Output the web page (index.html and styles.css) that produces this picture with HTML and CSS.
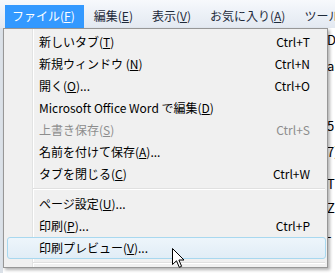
FILE: index.html
```html
<!DOCTYPE html>
<html lang="ja">
<head>
<meta charset="utf-8">
<link rel="stylesheet" href="styles.css">
</head>
<body>
<div class="window">
  <div class="menubar">
    <span class="mb-item active">ファイル(<u>F</u>)</span>
    <span class="mb-item">編集(<u>E</u>)</span>
    <span class="mb-item">表示(<u>V</u>)</span>
    <span class="mb-item">お気に入り(<u>A</u>)</span>
    <span class="mb-item">ツール(<u>T</u>)</span>
  </div>
  <div class="page">
    <div class="sidebar"></div>
    <div class="content">
      <p class="frag f1">Da</p>
      <p class="frag f2">al</p>
      <p class="frag f3">5</p>
      <p class="frag f4">7)</p>
      <p class="frag f5">T</p>
      <p class="frag f6">Z</p>
      <p class="frag f7">-</p>
    </div>
  </div>

  <div class="menu">
    <div class="item"><span>新しいタブ(<u>T</u>)</span><span class="key">Ctrl+T</span></div>
    <div class="item"><span>新規ウィンドウ (<u>N</u>)</span><span class="key">Ctrl+N</span></div>
    <div class="item"><span>開く(<u>O</u>)...</span><span class="key">Ctrl+O</span></div>
    <div class="item"><span>Microsoft Office Word で編集(<u>D</u>)</span></div>
    <div class="item disabled"><span>上書き保存(<u>S</u>)</span><span class="key">Ctrl+S</span></div>
    <div class="item"><span>名前を付けて保存(<u>A</u>)...</span></div>
    <div class="item"><span>タブを閉じる(<u>C</u>)</span><span class="key">Ctrl+W</span></div>
    <div class="sep"></div>
    <div class="item"><span>ページ設定(<u>U</u>)...</span></div>
    <div class="item"><span>印刷(<u>P</u>)...</span><span class="key">Ctrl+P</span></div>
    <div class="item hover"><span>印刷プレビュー(<u>V</u>)...</span></div>
    <div class="sep"></div>
  </div>

  <svg class="cursor" width="14" height="22" viewBox="0 0 14 22">
    <path d="M0.5 0.5 L0.5 16.5 L4.5 12.8 L7.3 19.3 L9.6 18.3 L6.9 12 L12 12 Z" fill="#fff" stroke="#000" stroke-width="1" stroke-linejoin="miter"/>
  </svg>
</div>
</body>
</html>
```

FILE: styles.css
```css
html, body {
  margin: 0;
  padding: 0;
}
body {
  width: 335px;
  height: 273px;
  overflow: hidden;
  background: #fff;
  font-family: "Meiryo UI", "Noto Sans CJK JP", "Noto Sans", sans-serif;
  font-size: 12px;
  color: #000;
}
u {
  text-decoration: underline;
  text-underline-offset: 1px;
}
.window {
  position: relative;
  width: 335px;
  height: 273px;
  display: flex;
  flex-direction: column;
  overflow: hidden;
}
.menubar {
  height: 28px;
  flex: none;
  display: flex;
  align-items: flex-end;
  gap: 3px;
  padding-left: 5px;
  box-sizing: border-box;
  overflow: hidden;
  background: linear-gradient(to bottom, #f7f9fc 0%, #eef2f8 40%, #e3e9f1 100%);
  white-space: nowrap;
}
.mb-item {
  flex: none;
  height: 23px;
  line-height: 21px;
  padding: 0 9px 0 7px;
  color: #1e2a3a;
}
.mb-item.active {
  background: #3399ff;
  color: #fff;
}
.page {
  flex: 1;
  display: flex;
}
.sidebar {
  width: 3px;
  background: #dbe1e8;
}
.content {
  flex: 1;
  position: relative;
  overflow: hidden;
  background: #fff;
  padding-left: 324px;
  font-family: "Noto Sans CJK JP", sans-serif;
  font-size: 13px;
}
.frag {
  margin: 0;
  height: 0;
  line-height: 16px;
  white-space: nowrap;
}
.f1 { margin-top: 4px; }
.f2 { margin-top: 26px; }
.f3 { margin-top: 60px; }
.f4 { margin-top: 26px; }
.f5 { margin-top: 32px; }
.f6 { margin-top: 24px; }
.f7 { margin-top: 28px; }

.menu {
  position: absolute;
  left: 3px;
  top: 28px;
  width: 325px;
  box-sizing: border-box;
  border: 1px solid #979797;
  padding: 2px 0 0;
  background: linear-gradient(to right, #f0f0f0 0 28px, #e2e3e3 28px 29px, #ffffff 29px 30px, #f0f0f0 30px);
  box-shadow: 2px 2px 3px rgba(0, 0, 0, 0.3);
}
.item {
  height: 22px;
  box-sizing: border-box;
  margin: 0 1px 0 3px;
  padding: 0 15px 0 31px;
  display: flex;
  justify-content: space-between;
  align-items: center;
  white-space: nowrap;
  border: 1px solid transparent;
  border-radius: 3px;
}
.item span {
  line-height: 16px;
}
.key {
  color: #000;
}
.item.disabled {
  color: #8d8d8d;
}
.item.disabled .key {
  color: #8d8d8d;
}
.item.hover {
  border-color: #a8d8ef;
  background: linear-gradient(to bottom, #edf5fb 0%, #e1edf6 100%);
}
.sep {
  height: 8px;
  margin: 0 2px 0 29px;
  background: linear-gradient(to bottom, transparent 0 3px, #e0e0e0 3px 4px, #ffffff 4px 5px, transparent 5px);
}
.cursor {
  position: absolute;
  left: 172px;
  top: 248px;
}
```
